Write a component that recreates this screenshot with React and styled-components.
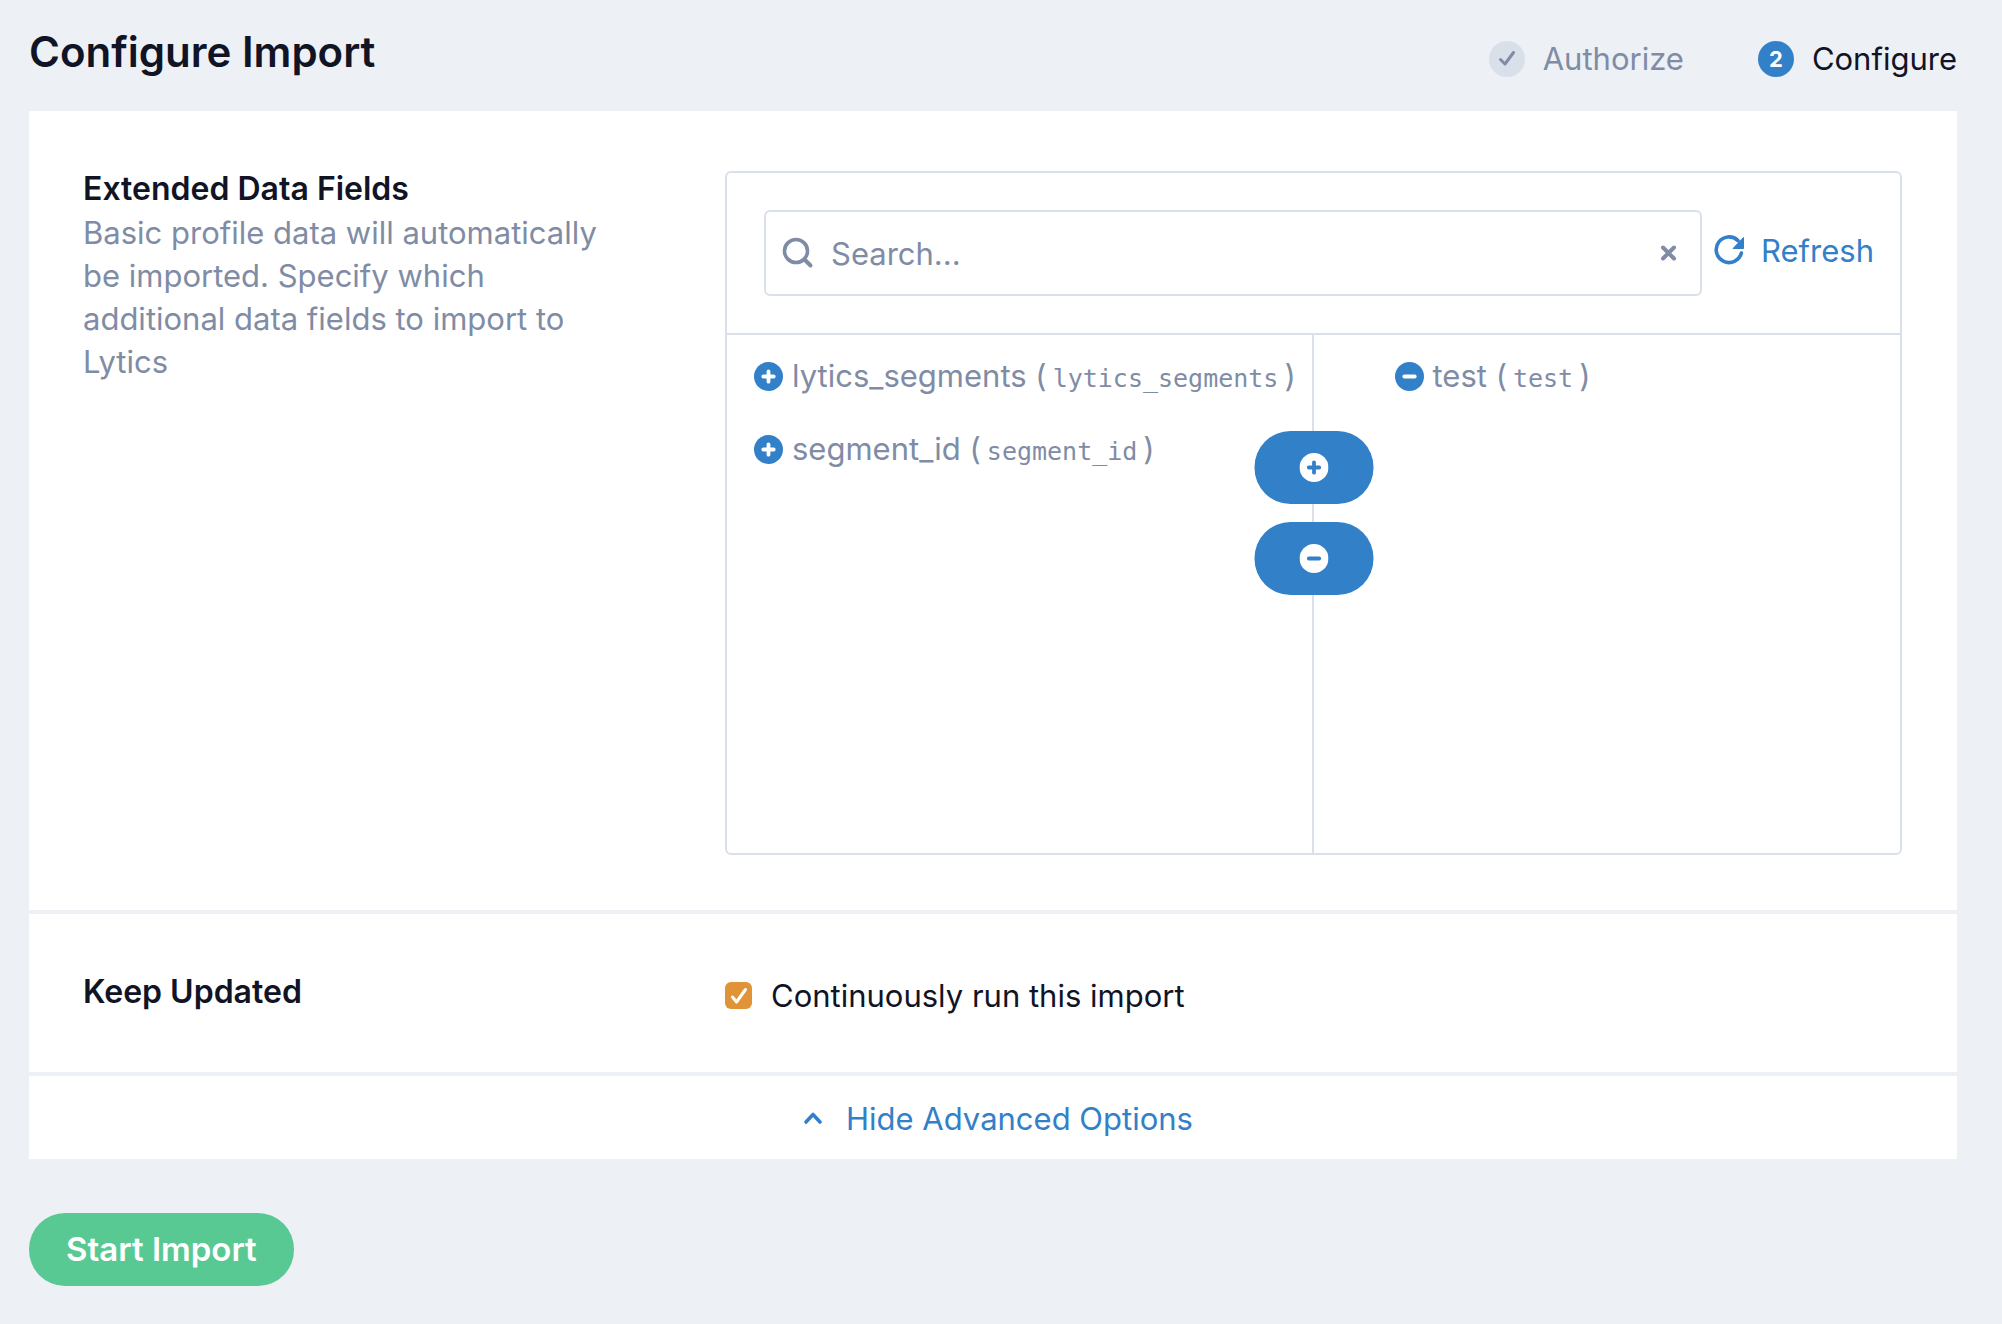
import React, { useState } from 'react';
import styled, { createGlobalStyle } from 'styled-components';

const colors = {
  page: '#edf0f5',
  border: '#d9e0ea',
  ink: '#101425',
  muted: '#808ca5',
  blue: '#3280c8',
  green: '#59c994',
  orange: '#e09337',
};

const GlobalStyle = createGlobalStyle`
  *,
  *::before,
  *::after {
    box-sizing: border-box;
  }

  body {
    margin: 0;
    background: ${colors.page};
    color: ${colors.ink};
    font-family: Inter, 'Liberation Sans', sans-serif;
    font-size: 31px;
    line-height: 43px;
  }

  button,
  input {
    font: inherit;
    color: inherit;
  }
`;

const Page = styled.div`
  padding: 0 45px 38px 29px;
`;

const Header = styled.header`
  display: flex;
  justify-content: space-between;
  align-items: center;
  height: 111px;
`;

const Title = styled.h1`
  margin: 0;
  padding-bottom: 8px;
  font-size: 42px;
  line-height: 52px;
  font-weight: 600;
`;

const Steps = styled.ol`
  display: flex;
  gap: 74px;
  margin: 0;
  padding: 6px 0 0;
  list-style: none;
`;

const Step = styled.li`
  display: flex;
  align-items: center;
  gap: 18px;
  color: ${props => (props.$done ? colors.muted : colors.ink)};
`;

const StepBadge = styled.span`
  display: flex;
  align-items: center;
  justify-content: center;
  width: 36px;
  height: 36px;
  border-radius: 50%;
  font-size: 22px;
  line-height: 36px;
  font-weight: 700;
  color: ${props => (props.$done ? colors.muted : '#fff')};
  background: ${props => (props.$done ? colors.border : colors.blue)};
`;

const Sections = styled.main`
  display: flex;
  flex-direction: column;
  gap: 4px;
`;

const Section = styled.section`
  display: grid;
  grid-template-columns: minmax(0, 6fr) minmax(0, 11fr);
  padding: 56px 55px 55px 54px;
  background: #fff;
`;

const SectionTitle = styled.h2`
  margin: 0;
  font-size: 32px;
  line-height: 44px;
  font-weight: 600;
`;

const Description = styled.p`
  max-width: 540px;
  margin: 0;
  color: ${colors.muted};
`;

const Picker = styled.div`
  margin-top: 4px;
  border: 2px solid ${colors.border};
  border-radius: 6px;
`;

const PickerToolbar = styled.div`
  display: flex;
  align-items: flex-start;
  gap: 12px;
  padding: 37px 26px 37px 37px;
  border-bottom: 2px solid ${colors.border};
`;

const SearchBox = styled.div`
  display: flex;
  flex: 1;
  align-items: center;
  gap: 17px;
  height: 86px;
  padding: 0 16px;
  border: 2px solid ${colors.border};
  border-radius: 6px;
  color: ${colors.muted};
`;

const SearchInput = styled.input`
  flex: 1;
  min-width: 0;
  padding: 0;
  border: 0;
  outline: 0;
  background: none;

  &::placeholder {
    color: ${colors.muted};
    opacity: 1;
  }
`;

const PlainButton = styled.button`
  display: flex;
  align-items: center;
  padding: 0;
  border: 0;
  background: none;
  cursor: pointer;
`;

const LinkButton = styled(PlainButton)`
  gap: ${props => props.$gap || '17px'};
  color: ${colors.blue};
`;

const RefreshButton = styled(LinkButton)`
  height: 80px;
`;

const Lists = styled.div`
  position: relative;
  display: grid;
  grid-template-columns: 1fr 1fr;
  height: 518px;
`;

const FieldList = styled.ul`
  margin: 0;
  padding: 20px 0 0 ${props => (props.$selected ? '81px' : '27px')};
  border-right: ${props => (props.$selected ? '0' : `2px solid ${colors.border}`)};
  list-style: none;
`;

const Field = styled.li`
  display: flex;
  align-items: center;
  gap: 9px;
  height: 43px;
  margin-bottom: 30px;
  color: ${colors.muted};
  white-space: nowrap;
`;

const FieldId = styled.code`
  padding: 0 6px;
  font-family: 'DejaVu Sans Mono', monospace;
  font-size: 25px;
`;

// Sits on top of the divider between the two lists
const MoveButtons = styled.div`
  position: absolute;
  top: 96px;
  left: 50%;
  display: flex;
  flex-direction: column;
  gap: 18px;
  transform: translateX(-50%);
`;

const MoveButton = styled(PlainButton)`
  justify-content: center;
  width: 119px;
  height: 73px;
  border-radius: 36px;
  background: ${colors.blue};
`;

const CheckLabel = styled.label`
  display: flex;
  align-items: center;
  gap: 19px;
  padding-top: 4px;
`;

const CheckMark = styled.span`
  position: relative;
  display: flex;
  width: 27px;
  height: 27px;

  svg {
    position: absolute;
    inset: 0;
    pointer-events: none;
  }
`;

const Checkbox = styled.input`
  appearance: none;
  width: 27px;
  height: 27px;
  margin: 0;
  border-radius: 6px;
  background: #fff;
  border: 2px solid ${colors.border};

  &:checked {
    border: 0;
    background: ${colors.orange};
  }
`;

const AdvancedBar = styled.div`
  display: flex;
  justify-content: center;
  padding: 21px 0 19px;
  background: #fff;
`;

const StartButton = styled.button`
  margin-top: 54px;
  padding: 15px 37px;
  border: 0;
  border-radius: 36px;
  background: ${colors.green};
  color: #fff;
  font-size: 33px;
  line-height: 43px;
  font-weight: 600;
  cursor: pointer;
`;

const CircleIcon = ({ minus, fill = colors.blue, mark = '#fff' }) => (
  <svg width="29" height="29" viewBox="0 0 29 29" aria-hidden="true">
    <circle cx="14.5" cy="14.5" r="14.5" fill={fill} />
    <path
      d={minus ? 'M9.3 14.5h10.4' : 'M9.3 14.5h10.4M14.5 9.3v10.4'}
      stroke={mark}
      strokeWidth="3.8"
      strokeLinecap="round"
    />
  </svg>
);

const CheckIcon = () => (
  <svg width="20" height="20" viewBox="0 0 20 20" aria-hidden="true">
    <path
      d="M3.5 10.5l4.5 4.5L16.5 3.5"
      fill="none"
      stroke="currentColor"
      strokeWidth="3"
      strokeLinecap="round"
      strokeLinejoin="round"
    />
  </svg>
);

const SearchIcon = () => (
  <svg width="32" height="32" viewBox="0 0 32 32" aria-hidden="true">
    <circle cx="14" cy="14" r="11.5" fill="none" stroke="currentColor" strokeWidth="3.6" />
    <path d="M22.5 22.5l6 6" stroke="currentColor" strokeWidth="4" strokeLinecap="round" />
  </svg>
);

const ClearIcon = () => (
  <svg width="25" height="16" viewBox="0 0 25 16" aria-hidden="true">
    <path d="M4 2.5l11 11M15 2.5l-11 11" stroke="currentColor" strokeWidth="4" strokeLinecap="round" />
  </svg>
);

const RefreshIcon = () => (
  <svg width="30" height="30" viewBox="0 0 30 30" aria-hidden="true">
    <path d="M27.4 18A12.8 12.8 0 1 1 24 5.6" fill="none" stroke="currentColor" strokeWidth="3.6" strokeLinecap="round" />
    <path d="M29.5 2.5v11h-10.5z" fill="currentColor" stroke="currentColor" strokeLinejoin="round" />
  </svg>
);

const ChevronIcon = () => (
  <svg width="40" height="16" viewBox="0 0 40 16" aria-hidden="true">
    <path
      d="M13 11l7-7.5 7 7.5"
      fill="none"
      stroke="currentColor"
      strokeWidth="3.6"
      strokeLinecap="round"
      strokeLinejoin="round"
    />
  </svg>
);

const FieldItem = ({ name, id, selected }) => (
  <Field>
    <PlainButton type="button" aria-label={`${selected ? 'Remove' : 'Add'} ${name}`}>
      <CircleIcon minus={selected} />
    </PlainButton>
    <span>
      {name} (<FieldId>{id}</FieldId>)
    </span>
  </Field>
);

const AVAILABLE = ['lytics_segments', 'segment_id'];
const SELECTED = ['test'];

const App = () => {
  const [search, setSearch] = useState('');
  const [keepUpdated, setKeepUpdated] = useState(true);

  return (
    <>
      <GlobalStyle />
      <Page>
        <Header>
          <Title>Configure Import</Title>
          <Steps>
            <Step $done>
              <StepBadge $done>
                <CheckIcon />
              </StepBadge>
              Authorize
            </Step>
            <Step aria-current="step">
              <StepBadge>2</StepBadge>
              Configure
            </Step>
          </Steps>
        </Header>

        <Sections>
          <Section>
            <div>
              <SectionTitle>Extended Data Fields</SectionTitle>
              <Description>
                Basic profile data will automatically be imported. Specify which
                additional data fields to import to Lytics
              </Description>
            </div>
            <Picker>
              <PickerToolbar>
                <SearchBox>
                  <SearchIcon />
                  <SearchInput
                    type="text"
                    aria-label="Search"
                    placeholder="Search..."
                    value={search}
                    onChange={e => setSearch(e.target.value)}
                  />
                  <PlainButton type="button" aria-label="Clear search" onClick={() => setSearch('')}>
                    <ClearIcon />
                  </PlainButton>
                </SearchBox>
                <RefreshButton type="button">
                  <RefreshIcon />
                  Refresh
                </RefreshButton>
              </PickerToolbar>
              <Lists>
                <FieldList>
                  {AVAILABLE.map(name => (
                    <FieldItem key={name} name={name} id={name} />
                  ))}
                </FieldList>
                <FieldList $selected>
                  {SELECTED.map(name => (
                    <FieldItem key={name} name={name} id={name} selected />
                  ))}
                </FieldList>
                <MoveButtons>
                  <MoveButton type="button" aria-label="Add all">
                    <CircleIcon fill="#fff" mark={colors.blue} />
                  </MoveButton>
                  <MoveButton type="button" aria-label="Remove all">
                    <CircleIcon minus fill="#fff" mark={colors.blue} />
                  </MoveButton>
                </MoveButtons>
              </Lists>
            </Picker>
          </Section>

          <Section>
            <SectionTitle>Keep Updated</SectionTitle>
            <CheckLabel>
              <CheckMark>
                <Checkbox
                  type="checkbox"
                  checked={keepUpdated}
                  onChange={e => setKeepUpdated(e.target.checked)}
                />
                {keepUpdated && (
                  <svg width="27" height="27" viewBox="0 0 27 27" aria-hidden="true">
                    <path
                      d="M7.5 15l4 5L20.5 7.5"
                      fill="none"
                      stroke="#fff"
                      strokeWidth="3"
                      strokeLinecap="round"
                      strokeLinejoin="round"
                    />
                  </svg>
                )}
              </CheckMark>
              Continuously run this import
            </CheckLabel>
          </Section>

          <AdvancedBar>
            <LinkButton type="button" $gap="13px">
              <ChevronIcon />
              Hide Advanced Options
            </LinkButton>
          </AdvancedBar>
        </Sections>

        <StartButton type="button">Start Import</StartButton>
      </Page>
    </>
  );
};

export default App;
